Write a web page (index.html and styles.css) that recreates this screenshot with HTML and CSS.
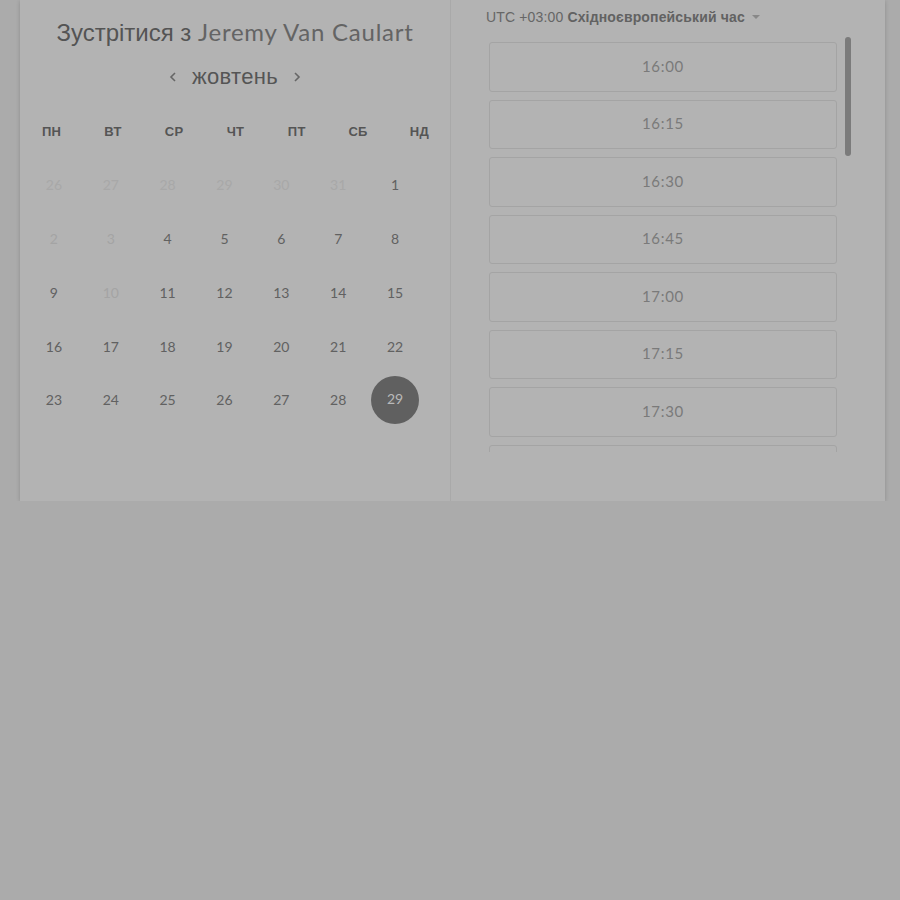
FILE: index.html
```html
<!DOCTYPE html>
<html lang="uk">
<head>
<meta charset="utf-8">
<link rel="stylesheet" href="styles.css">
</head>
<body>
<div class="card">
  <section class="left">
    <h1 class="title"><span class="title-a">Зустрітися з</span> <span class="title-b">Jeremy Van Caulart</span></h1>
    <div class="month">
      <svg class="chev" width="10" height="12" viewBox="0 0 10 12"><polyline points="7,2 3,6 7,10" fill="none" stroke="#666" stroke-width="1.6"/></svg>
      <span class="month-name">жовтень</span>
      <svg class="chev" width="10" height="12" viewBox="0 0 10 12"><polyline points="3,2 7,6 3,10" fill="none" stroke="#666" stroke-width="1.6"/></svg>
    </div>
    <div class="weekdays">
      <span>ПН</span><span>ВТ</span><span>СР</span><span>ЧТ</span><span>ПТ</span><span>СБ</span><span>НД</span>
    </div>
    <div class="days">
      <span class="off">26</span><span class="off">27</span><span class="off">28</span><span class="off">29</span><span class="off">30</span><span class="off">31</span><span>1</span>
      <span class="dis">2</span><span class="dis">3</span><span>4</span><span>5</span><span>6</span><span>7</span><span>8</span>
      <span>9</span><span class="dis">10</span><span>11</span><span>12</span><span>13</span><span>14</span><span>15</span>
      <span>16</span><span>17</span><span>18</span><span>19</span><span>20</span><span>21</span><span>22</span>
      <span>23</span><span>24</span><span>25</span><span>26</span><span>27</span><span>28</span><span class="sel"><b>29</b></span>
    </div>
  </section>
  <section class="right">
    <div class="tz">UTC +03:00 <strong>Східноєвропейський час</strong> <span class="caret"></span></div>
    <div class="slots-wrap">
      <div class="slots">
        <div class="slot">16:00</div>
        <div class="slot">16:15</div>
        <div class="slot">16:30</div>
        <div class="slot">16:45</div>
        <div class="slot">17:00</div>
        <div class="slot">17:15</div>
        <div class="slot">17:30</div>
        <div class="slot"></div>
      </div>
      <div class="thumb"></div>
    </div>
  </section>
</div>
</body>
</html>
```

FILE: styles.css
```css
html, body {
  margin: 0;
  padding: 0;
  background: #ababab;
  font-family: "Liberation Sans", Arial, sans-serif;
}

.card {
  display: flex;
  margin-left: 20px;
  width: 865px;
  height: 501px;
  background: #b3b3b3;
  box-shadow: 0 1px 4px rgba(0, 0, 0, 0.18);
}

.left {
  width: 430px;
  border-right: 1px solid #a9a9a9;
  box-sizing: content-box;
}

.title {
  margin: 0;
  padding-top: 18px;
  font-size: 24px;
  line-height: 28px;
  font-weight: normal;
  text-align: center;
  white-space: nowrap;
}

.title-a {
  color: #545454;
}

.title-b {
  font-family: "Lato", "Liberation Sans", sans-serif;
  color: #646464;
  letter-spacing: 0.75px;
}

.month {
  margin-top: 18px;
  height: 24px;
  display: flex;
  align-items: center;
  justify-content: center;
  gap: 14px;
}

.month-name {
  font-size: 22px;
  line-height: 24px;
  color: #555;
  letter-spacing: 0.3px;
}

.chev {
  display: block;
}

.weekdays {
  margin-top: 35px;
  display: grid;
  grid-template-columns: repeat(7, 1fr);
  padding-left: 1px;
  font-size: 13px;
  line-height: 16px;
  font-weight: bold;
  color: #555;
  text-align: center;
  letter-spacing: 0.3px;
}

.days {
  margin-top: 18px;
  margin-left: 5.5px;
  width: 398px;
  display: grid;
  grid-template-columns: repeat(7, 1fr);
  grid-auto-rows: 53.75px;
  font-family: "Lato", "Liberation Sans", sans-serif;
  font-size: 14px;
  color: #616161;
}

.days span {
  display: flex;
  align-items: center;
  justify-content: center;
}

.days .off {
  color: #a8a8a8;
}

.days .dis {
  color: #a4a4a4;
}

.days .sel b {
  font-weight: normal;
  width: 48px;
  height: 48px;
  border-radius: 50%;
  background: #606060;
  color: #b9b9b9;
  display: flex;
  align-items: center;
  justify-content: center;
  padding-bottom: 2px;
  box-sizing: border-box;
}

.right {
  flex: 1;
  padding-left: 35px;
}

.tz {
  padding-top: 9px;
  font-size: 14px;
  line-height: 16px;
  color: #666;
  white-space: nowrap;
  letter-spacing: 0.15px;
}

.tz strong {
  color: #626262;
}

.caret {
  display: inline-block;
  width: 0;
  height: 0;
  margin-left: 3px;
  vertical-align: 3px;
  border-left: 4px solid transparent;
  border-right: 4px solid transparent;
  border-top: 4px solid #888;
}

.slots-wrap {
  position: relative;
  margin-top: 12px;
  margin-left: 2px;
  width: 366px;
  height: 415px;
  overflow: hidden;
}

.slots {
  padding-top: 5px;
  margin-left: 1px;
  width: 348px;
  display: flex;
  flex-direction: column;
  gap: 8px;
}

.slot {
  flex: none;
  height: 49.5px;
  box-sizing: border-box;
  border: 1px solid #a4a4a4;
  border-radius: 3px;
  display: flex;
  align-items: center;
  justify-content: center;
  padding-bottom: 2px;
  font-family: "Lato", "Liberation Sans", sans-serif;
  font-size: 15px;
  letter-spacing: 0.7px;
  color: #7a7a7a;
}

.thumb {
  position: absolute;
  left: 357px;
  top: 0;
  width: 6px;
  height: 119px;
  border-radius: 3px;
  background: #7b7b7b;
}
```
